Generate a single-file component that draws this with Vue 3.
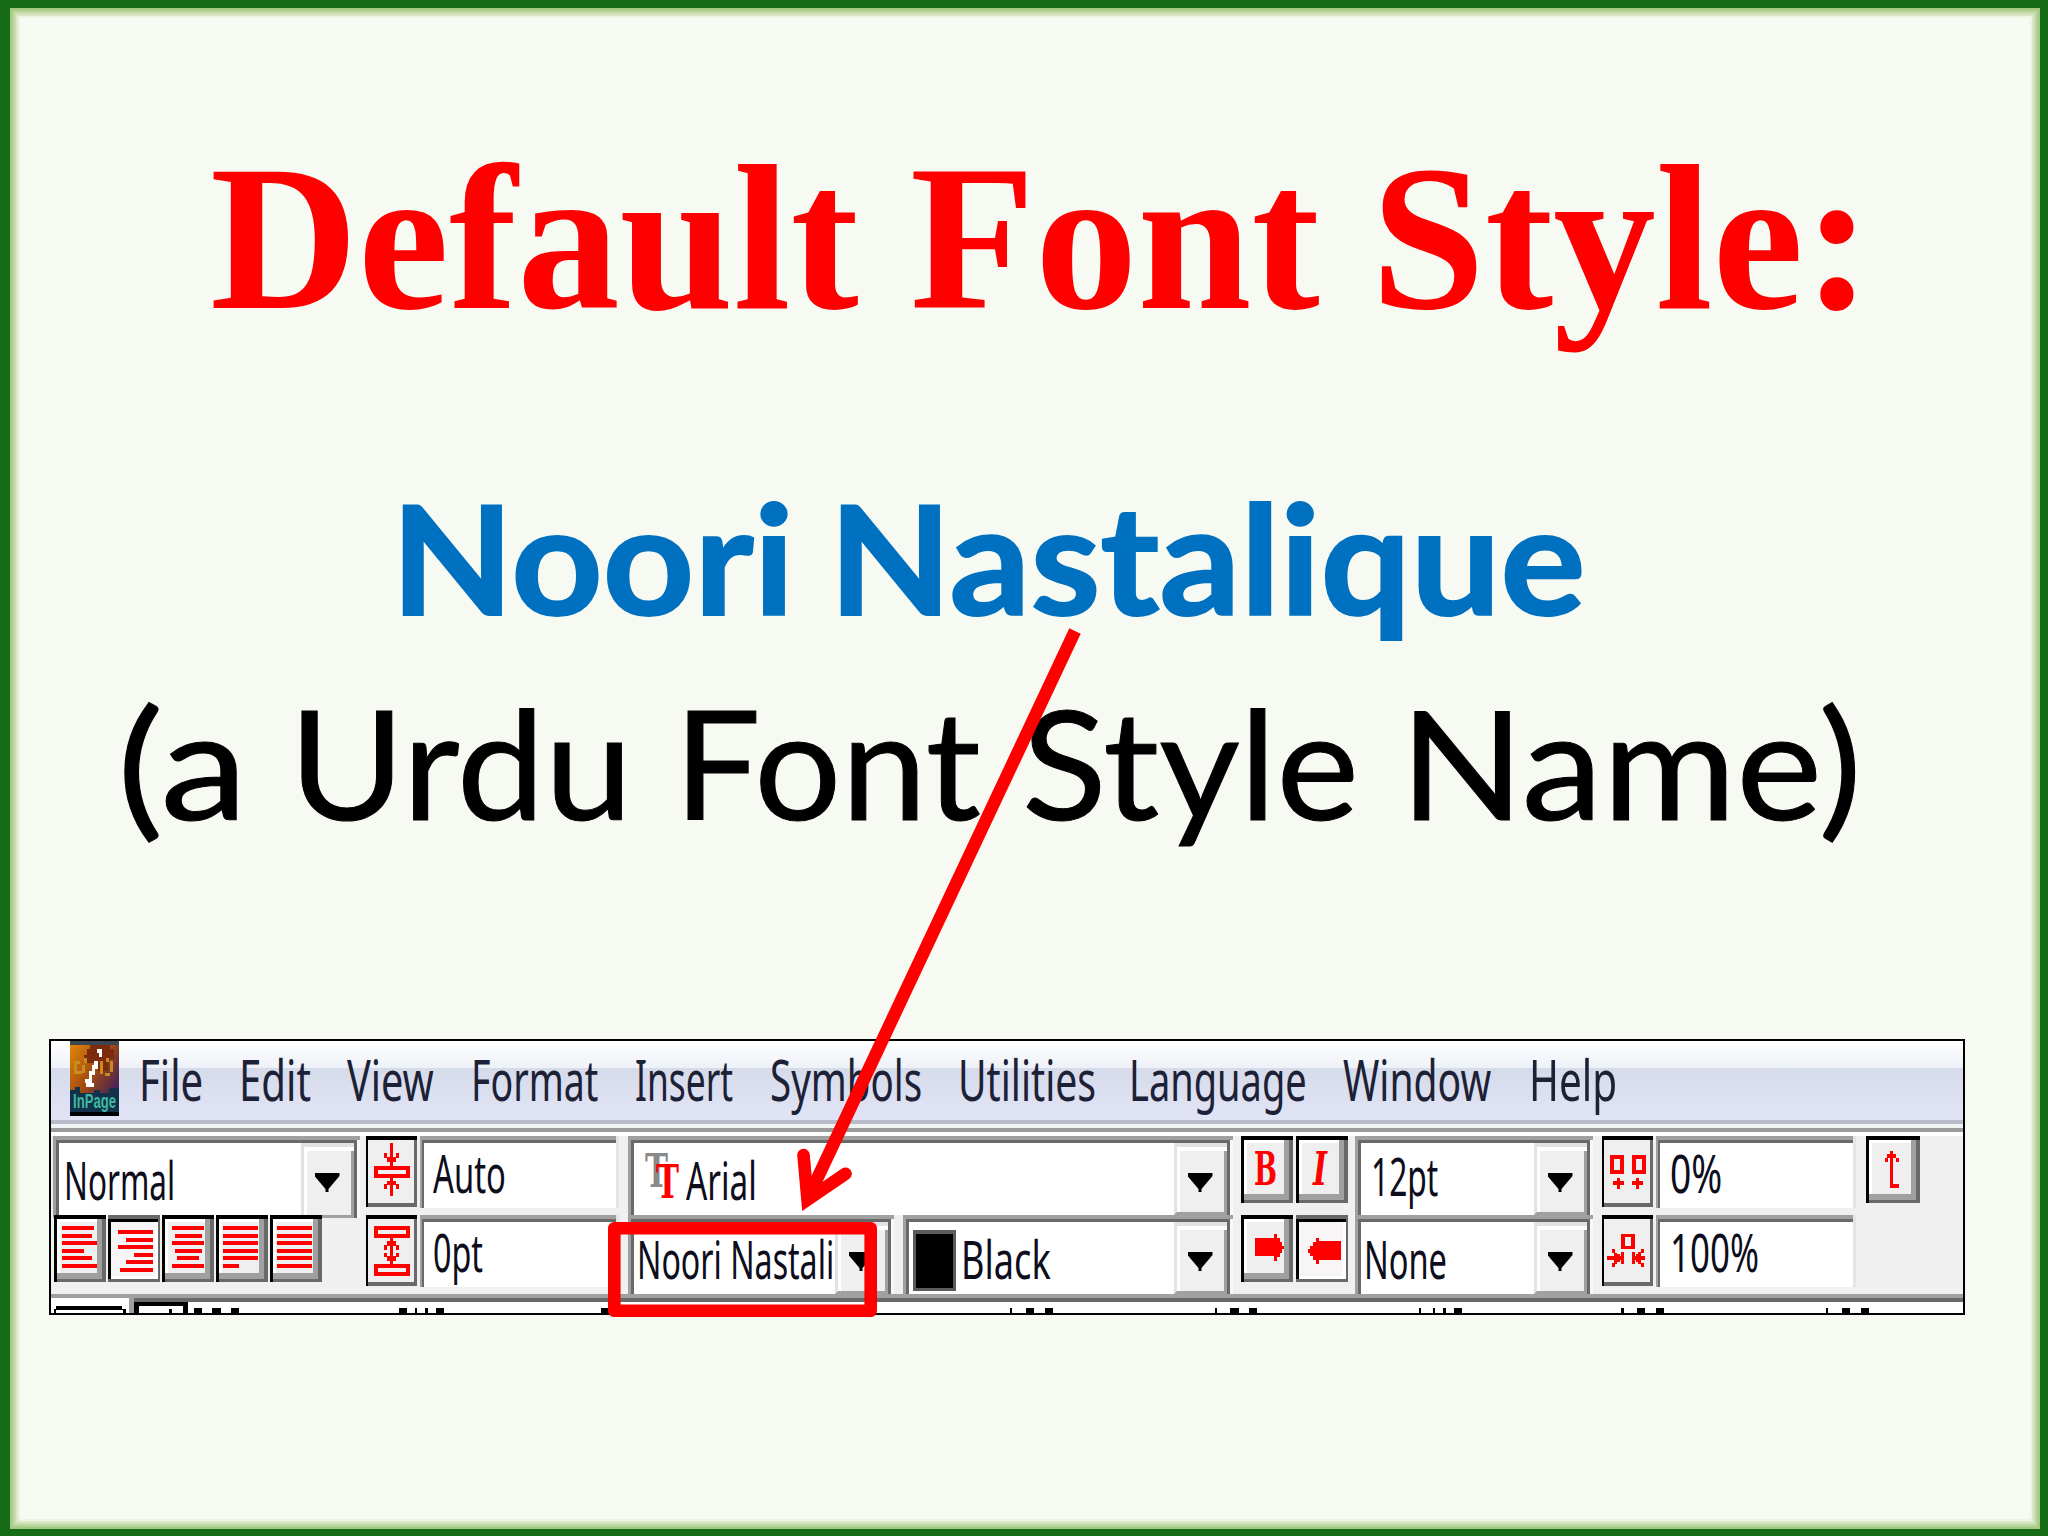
<template>
  <div class="slide">
    <h1 class="title"><span v-fit="1662" class="fit">Default Font Style:</span></h1>
    <p class="line font-name">
      <span v-for="word in fontName" :key="word.text" class="word" :style="{ width: word.width + 'px' }"
      ><span v-fit="word.width" class="fit">{{ word.text }}</span></span>
    </p>
    <p class="line note">
      <span v-for="word in note" :key="word.text" class="word" :style="{ width: word.width + 'px' }"
      ><span v-fit="word.width" class="fit">{{ word.text }}</span></span>
    </p>

    <div class="window">
      <nav class="menu-bar">
        <!-- InPage logo -->
        <svg class="logo" width="49" height="75" viewBox="0 0 49 75" shape-rendering="crispEdges">
          <defs>
            <linearGradient id="logoBg" x1="0" y1="0" x2="1" y2="1">
              <stop offset="0" stop-color="#e58a08" />
              <stop offset="0.45" stop-color="#a04a10" />
              <stop offset="0.8" stop-color="#43215a" />
              <stop offset="1" stop-color="#15204a" />
            </linearGradient>
          </defs>
          <rect width="49" height="75" fill="url(#logoBg)" />
          <rect width="49" height="4" fill="#3c4650" />
          <path d="M20 4h20v4h4v10h-6v12h-10v-8h-14v-8h3v-6h3z" fill="#7c2c0c" />
          <path d="M4 20h6v3h-3v7h5v3h-8zM14 17h3v5h-3zM12 24h3v8h-3zM30 20h3v13h-3zM36 17h3v4h-3zM40 20h3v11h-3v4h-5v-3h5z" fill="#c98a20" />
          <path d="M27 8h5v8h-3v-4h-2zM24 20h4v8h-3v6h-3v8h2v4h-8v-4h-1v-4h4v-8h3v-6h2z" fill="#fff" />
          <path d="M0 49h5v-3h5v6h14v-3h6v3h9v-5h10v28h-49z" fill="#12314a" />
          <rect y="71" width="49" height="4" fill="#000" />
          <text x="3" y="67" textLength="43" lengthAdjust="spacingAndGlyphs" class="logo-text">InPage</text>
        </svg>
        <span
          v-for="item in menuItems"
          :key="item.label"
          class="menu-item"
          :style="{ width: item.width + 'px', marginLeft: item.gap + 'px' }"
        ><span v-fit="item.width" class="fit">{{ item.label }}</span></span>
      </nav>

      <div class="toolbar">
        <div class="group styles">
          <div class="combo combo-style">
            <span class="value"><span v-fit="111" class="fit">Normal</span></span>
            <span class="drop"><i class="arrow"></i></span>
          </div>
          <div class="buttons">
            <button v-for="align in alignments" :key="align.name" class="tool" :class="{ pressed: align.pressed }">
              <svg width="52" height="67" viewBox="0 0 52 67" shape-rendering="crispEdges">
                <rect v-for="(bar, i) in align.bars" :key="i" :x="bar[0]" :y="align.top + i * 7.6" :width="bar[1]" height="4" fill="#f00" />
              </svg>
            </button>
          </div>
        </div>

        <div class="group spacing">
          <div class="row">
            <button class="flat">
              <svg width="51" height="71" viewBox="0 0 51 71" shape-rendering="crispEdges" class="stroke">
                <path d="M25.500 7v24M25.500 41v19M10 32h32v8h-32z" />
                <path d="M19.500 17v5M31.500 17v5M22.500 21v5M28.500 21v5M22.500 45v4M28.500 45v4M19.500 48v5M31.500 48v5" />
              </svg>
            </button>
            <div class="field"><span class="value"><span v-fit="73" class="fit">Auto</span></span></div>
          </div>
          <div class="row">
            <button class="flat">
              <svg width="51" height="71" viewBox="0 0 51 71" shape-rendering="crispEdges" class="stroke">
                <path d="M10 13h32v8h-32zM10 51h32v8h-32zM25.500 22v28" />
                <path d="M22.500 26v5M28.500 26v5M19.500 30v5M31.500 30v5M19.500 38v4M31.500 38v4M22.500 41v5M28.500 41v5" />
              </svg>
            </button>
            <div class="field"><span class="value"><span v-fit="50" class="fit">0pt</span></span></div>
          </div>
        </div>

        <div class="group fonts">
          <div class="combo combo-latin">
            <svg class="tt" width="36" height="79" viewBox="0 0 36 79">
              <text x="0" y="51" textLength="23" lengthAdjust="spacingAndGlyphs" fill="#8a8a8a">T</text>
              <text x="11" y="62" textLength="23" lengthAdjust="spacingAndGlyphs" fill="#f00">T</text>
            </svg>
            <span class="value"><span v-fit="71" class="fit">Arial</span></span>
            <span class="drop"><i class="arrow"></i></span>
          </div>
          <div class="row">
            <div class="combo combo-urdu">
              <span class="value"><span v-fit="197" class="fit">Noori Nastali</span></span>
              <span class="drop"><i class="arrow"></i></span>
            </div>
            <div class="combo combo-color">
              <span class="swatch"></span>
              <span class="value"><span v-fit="90" class="fit">Black</span></span>
              <span class="drop"><i class="arrow"></i></span>
            </div>
          </div>
        </div>

        <div class="group marks">
          <div class="buttons">
            <button class="tool">
              <svg width="52" height="67" viewBox="0 0 52 67" class="letter">
                <text x="13" y="49" textLength="23" lengthAdjust="spacingAndGlyphs">B</text>
              </svg>
            </button>
            <button class="tool">
              <svg width="52" height="67" viewBox="0 0 52 67" class="letter">
                <text x="17" y="49" textLength="14" lengthAdjust="spacingAndGlyphs" font-style="italic">I</text>
              </svg>
            </button>
          </div>
          <div class="buttons">
            <button class="tool">
              <svg width="52" height="67" viewBox="0 0 52 67" shape-rendering="crispEdges">
                <path d="M14 23h19v-4h3v4h3v4h2v4h2v3h-2v4h-2v4h-3v4h-3v-5h-19z" fill="#f00" />
              </svg>
            </button>
            <button class="tool pressed">
              <svg width="52" height="67" viewBox="0 0 52 67" shape-rendering="crispEdges">
                <path d="M45 26h-22v-3h-3v4h-3v4h-3v3h-2v4h2v3h3v4h3v4h3v-4h22z" fill="#f00" />
              </svg>
            </button>
          </div>
        </div>

        <div class="group sizes">
          <div class="combo combo-size">
            <span class="value"><span v-fit="67" class="fit">12pt</span></span>
            <span class="drop"><i class="arrow"></i></span>
          </div>
          <div class="combo combo-none">
            <span class="value"><span v-fit="83" class="fit">None</span></span>
            <span class="drop"><i class="arrow"></i></span>
          </div>
        </div>

        <div class="group scaling">
          <div class="row">
            <button class="flat">
              <svg width="51" height="71" viewBox="0 0 51 71" shape-rendering="crispEdges" class="stroke">
                <path d="M10 21h10v15h-10zM32 21h10v15h-10zM11 47h11M16.500 42v11M30 47h11M35.500 42v11" />
              </svg>
            </button>
            <div class="field"><span class="value"><span v-fit="52" class="fit">0%</span></span></div>
          </div>
          <div class="row">
            <button class="flat">
              <svg width="51" height="71" viewBox="0 0 51 71" shape-rendering="crispEdges" class="stroke">
                <path d="M21 20.500h10v12h-10z" />
                <path d="M5 43h15M20.500 37v12M16.500 39v8M13.500 38v3M13.500 45v4M11.500 34v4M11.500 48v4" />
                <path d="M30 43h13M31.500 37v12M35.500 39v8M37.500 37v4M37.500 45v4M40.500 34v4M40.500 48v4" />
              </svg>
            </button>
            <div class="field"><span class="value"><span v-fit="89" class="fit">100%</span></span></div>
          </div>
        </div>

        <div class="group direction">
          <button class="tool">
            <svg width="54" height="67" viewBox="0 0 54 67" shape-rendering="crispEdges" class="stroke">
              <path d="M25.500 15v35h7M20.500 22v4M31.500 22v4M23 18v4M28.500 18v4" />
            </svg>
          </button>
        </div>
      </div>

      <svg class="ruler" width="1912" height="19" viewBox="0 0 1912 19" shape-rendering="crispEdges">
        <rect width="1912" height="19" fill="#fff" />
        <rect width="1912" height="4" fill="#a0a0a0" />
        <rect x="78" y="4" width="1834" height="4" fill="#696969" />
        <rect x="78" y="4" width="5" height="15" fill="#a0a0a0" />
        <path d="M5 12h66v3h4v4h-3v-3h-67v3h-2v-4h2z" fill="#000" />
        <path d="M83 8h54v11h-5v-7h-44v7h-5zM118 15h3v4h-3z" fill="#000" />
        <rect v-for="(mark, i) in rulerMarks" :key="i" :x="mark[0] - 51" y="14" :width="mark[1]" height="5" fill="#000" />
      </svg>
    </div>

    <!-- Callout: arrow and highlight frame over the font box -->
    <svg class="callout" width="2048" height="1536" viewBox="0 0 2048 1536">
      <rect x="614.300" y="1228.300" width="256.400" height="82.400" stroke-linejoin="round" />
      <path d="M1075 631L809 1196" />
      <path d="M803.500 1155L807.500 1199.700L845.500 1173.800" stroke-linecap="round" stroke-linejoin="miter" />
    </svg>
  </div>
</template>

<script setup>
// Squeezes a label horizontally to the given width
const vFit = {
  mounted(el, binding) {
    el.style.transform = `scaleX(${binding.value / el.offsetWidth})`;
  }
};

const fontName = [
  { text: 'Noori', width: 403 },
  { text: 'Nastalique', width: 757 }
];

const note = [
  { text: '(a', width: 131 },
  { text: 'Urdu', width: 344 },
  { text: 'Font', width: 307 },
  { text: 'Style', width: 337 },
  { text: 'Name)', width: 462 }
];

const menuItems = [
  { label: 'File', width: 64, gap: 20 },
  { label: 'Edit', width: 72, gap: 36 },
  { label: 'View', width: 87, gap: 36 },
  { label: 'Format', width: 127, gap: 37 },
  { label: 'Insert', width: 98, gap: 37 },
  { label: 'Symbols', width: 152, gap: 37 },
  { label: 'Utilities', width: 138, gap: 36 },
  { label: 'Language', width: 178, gap: 33 },
  { label: 'Window', width: 148, gap: 36 },
  { label: 'Help', width: 88, gap: 38 }
];

// bars: [x, width] of each text line in the icon
const alignments = [
  { name: 'left', top: 11, bars: [[8, 32], [8, 30], [8, 35], [8, 22], [8, 30], [8, 35]] },
  { name: 'right', top: 15, pressed: true, bars: [[10, 35], [18, 27], [10, 35], [26, 19], [18, 27], [12, 33]] },
  { name: 'center', top: 11, bars: [[10, 32], [13, 27], [10, 32], [13, 27], [15, 22], [10, 32]] },
  { name: 'justify', top: 11, bars: [[7, 35], [7, 35], [7, 35], [7, 35], [7, 35], [7, 16]] },
  { name: 'force', top: 11, bars: [[7, 35], [7, 35], [7, 35], [7, 35], [7, 35], [7, 35]] }
];

const rulerMarks = [
  [194, 8], [212, 9], [231, 8],
  [399, 8], [415, 2], [425, 3], [436, 8],
  [601, 9],
  [1010, 2], [1026, 8], [1045, 8],
  [1215, 2], [1230, 9], [1249, 8],
  [1419, 2], [1433, 2], [1443, 3], [1454, 8],
  [1621, 3], [1637, 8], [1656, 8],
  [1826, 2], [1842, 8], [1861, 8]
];
</script>

<style>
body {
  margin: 0;
  background: #f8fbf3;
}
</style>

<style scoped>
.slide {
  position: relative;
  box-sizing: border-box;
  width: 2048px;
  height: 1536px;
  padding-top: 131px;
  overflow: hidden;
  background: #f7faf3;
  border-style: solid;
  border-color: #156b16;
  border-width: 8px 8px 7px 10px;
  box-shadow: inset 0 0 0 2px #a3c983, inset 0 0 0 4px #b5d296, inset 0 0 0 6px #c8dcae, inset 0 0 0 8px #dbe8c6,
    inset 0 0 0 10px #eef4e2;
}

.fit {
  display: inline-block;
  white-space: nowrap;
  transform-origin: left center;
}

.title {
  height: 200px;
  margin: 0 0 0 200px;
  font: bold 207px/200px 'Liberation Serif', serif;
  color: #f00;
}

.line {
  display: flex;
  height: 205px;
  margin: 0;
  font-family: Lato, sans-serif;
  font-size: 151px;
  line-height: 205px;
}

.word {
  flex: none;
}

.font-name {
  gap: 35px;
  margin-top: 115px;
  padding-left: 381px;
  font-weight: bold;
  color: #0070c0;
  -webkit-text-stroke: 2px #0070c0;
}

.note {
  gap: 41px;
  padding-left: 107px;
  color: #000;
  -webkit-text-stroke: 1px #000;
}

.window {
  width: 1912px;
  height: 272px;
  margin: 175px 0 0 39px;
  overflow: hidden;
  border: 2px solid #000;
  background: #f0f0f0;
  font-family: 'Noto Sans', sans-serif;
}

.menu-bar {
  display: flex;
  box-sizing: border-box;
  height: 95px;
  padding-left: 19px;
  font-size: 57px;
  line-height: 77px;
  color: #1c2136;
  background: linear-gradient(#fff 0, #eef1f8 27px, #d6dbea 27px, #e1e4f6 79px, #b7bbca 79px, #b7bbca 83px, #f1f3f3 83px,
      #f1f3f3 87px, #9c9c9c 87px, #9c9c9c 91px, #fff 91px);
}

.logo-text {
  font: bold 20px 'Liberation Sans', sans-serif;
  fill: #3fb8a0;
}

.toolbar {
  display: flex;
  height: 158px;
}

.row,
.buttons {
  display: flex;
  height: 79px;
}

.combo {
  display: flex;
  box-sizing: border-box;
  height: 79px;
  padding: 7px 6px 0 7px;
  background: #fff;
  box-shadow: inset 3px 0 #a0a0a0, inset 0 4px #a0a0a0, inset -3px 0 #f8f8f8, inset 6px 7px #696969, inset -6px 0 #696969;
}

.value {
  flex: 1;
  width: 0;
  margin-top: -7px;
  font-size: 53px;
  line-height: 88px;
  color: #0d0d1c;
}

.drop {
  display: flex;
  justify-content: center;
  box-sizing: border-box;
  width: 53px;
  height: 72px;
  padding: 26px 4px 0 0;
  background: #f0eff0;
  border: solid #e3e1e3;
  border-width: 4px 0 0 3px;
  border-bottom: 3px solid #a0a0a0;
  box-shadow: inset 3px 4px #fff, inset -3px 0 #a0a0a0;
}

.arrow {
  width: 25px;
  height: 19px;
  background: #000;
  clip-path: polygon(0 0, 100% 0, 100% 16%, 56% 84%, 56% 100%, 44% 100%, 44% 84%, 0 16%);
}

.field {
  box-sizing: border-box;
  width: 200px;
  height: 72px;
  padding-left: 13px;
  background: #fff;
  border-right: 3px solid #e4e4e4;
  box-shadow: inset 2px 4px #a0a0a0, inset 4px 7px #696969;
}

.field .value {
  display: block;
  width: auto;
  margin: 0;
  line-height: 73px;
}

.tool,
.flat {
  display: block;
  flex: none;
  box-sizing: border-box;
  padding: 0;
  border: 0;
  background: #f0eff0;
}

.tool {
  width: 52px;
  height: 67px;
  box-shadow: inset 3px 0 #000, inset 0 4px #000, inset 0 -3px #696969, inset -4px 0 #696969, inset -9px -9px #a0a0a0,
    inset 6px 7px #fff;
}

.tool.pressed {
  background: #f8f5f6;
  box-shadow: inset 0 4px #696969, inset -2px -3px #696969, inset 3px 7px #000, inset -5px -6px #fff;
}

.tool svg,
.flat svg {
  display: block;
}

.flat {
  width: 51px;
  height: 71px;
  box-shadow: inset 0 4px #000, inset 2px 0 #000, inset -3px -4px #696969;
}

.stroke {
  fill: none;
  stroke: #f00;
  stroke-width: 3.300;
}

.letter {
  font: bold 47px 'DejaVu Serif', serif;
  fill: #f00;
}

.styles {
  width: 307px;
  margin-left: 2px;
}

.combo-style {
  height: 82px;
  margin-bottom: -3px;
}

.combo-style .value {
  padding-left: 4px;
}

.combo-style .drop {
  height: 75px;
}

.styles .buttons {
  position: relative;
  gap: 2px;
  padding-left: 1px;
}

.spacing {
  width: 253px;
  margin-left: 6px;
}

.spacing .row,
.scaling .row {
  gap: 3px;
}

.scaling .value {
  padding-left: 1px;
}

.fonts {
  width: 605px;
  margin-left: 9px;
}

.combo-latin {
  padding-left: 17px;
}

.tt {
  margin: -7px 5px 0 0;
  font: bold 46px 'DejaVu Serif', serif;
}

.fonts .row {
  gap: 9px;
}

.combo-urdu {
  width: 266px;
}

.combo-urdu .value {
  padding-left: 2px;
  overflow: hidden;
}

.combo-color {
  width: 330px;
}

.swatch {
  box-sizing: border-box;
  width: 43px;
  height: 61px;
  margin: 8px 5px 0 3px;
  background: #000;
  border: 3px solid #5c5a5c;
  border-top-width: 4px;
}

.marks {
  width: 107px;
  margin-left: 8px;
}

.marks .buttons {
  gap: 3px;
}

.sizes {
  width: 238px;
  margin-left: 7px;
}

.combo-size .value {
  padding-left: 9px;
  line-height: 80px;
}

.combo-none .value {
  padding-left: 2px;
}

.scaling {
  width: 254px;
  margin-left: 9px;
}

.direction {
  margin-left: 10px;
}

.direction .tool {
  width: 54px;
}

.ruler {
  display: block;
}

.callout {
  position: absolute;
  top: -8px;
  left: -10px;
  fill: none;
  stroke: #f00;
  stroke-width: 12.600;
}
</style>
